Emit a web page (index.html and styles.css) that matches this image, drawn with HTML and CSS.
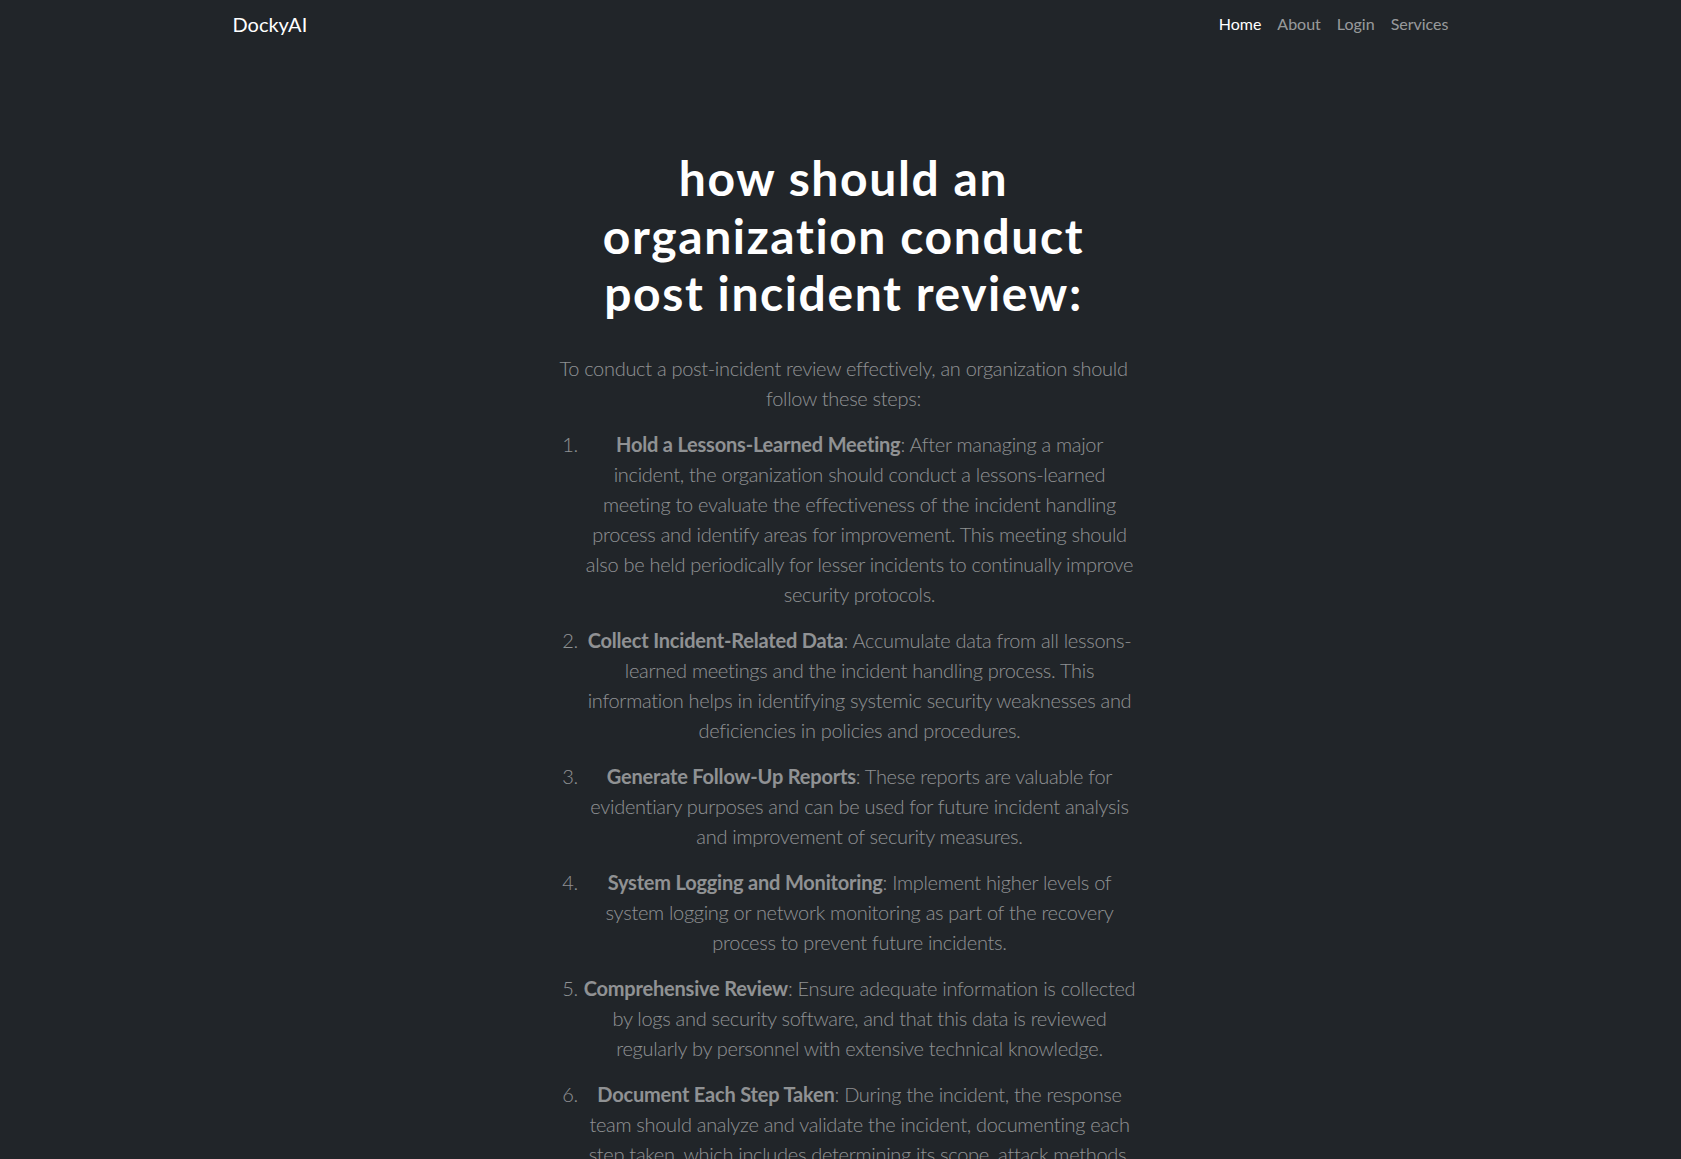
FILE: index.html
```html
<!DOCTYPE html>
<html lang="en">
<head>
<meta charset="utf-8">
<title>DockyAI</title>
<link rel="stylesheet" href="styles.css">
</head>
<body>
<header class="navbar">
  <div class="container nav-inner">
    <a class="brand" href="#">DockyAI</a>
    <nav class="nav-links">
      <a class="nav-link active" href="#">Home</a>
      <a class="nav-link" href="#">About</a>
      <a class="nav-link" href="#">Login</a>
      <a class="nav-link" href="#">Services</a>
    </nav>
  </div>
</header>
<main class="content">
  <h1 class="title">how should an organization conduct post incident review:</h1>
  <div class="answer">
    <p>To conduct a post-incident review effectively, an organization should follow these steps:</p>
    <ol>
      <li><p><strong>Hold a Lessons-Learned Meeting</strong>: After managing a major incident, the organization should conduct a lessons-learned meeting to evaluate the effectiveness of the incident handling process and identify areas for improvement. This meeting should also be held periodically for lesser incidents to continually improve security protocols.</p></li>
      <li><p><strong>Collect Incident-Related Data</strong>: Accumulate data from all lessons-learned meetings and the incident handling process. This information helps in identifying systemic security weaknesses and deficiencies in policies and procedures.</p></li>
      <li><p><strong>Generate Follow-Up Reports</strong>: These reports are valuable for evidentiary purposes and can be used for future incident analysis and improvement of security measures.</p></li>
      <li><p><strong>System Logging and Monitoring</strong>: Implement higher levels of system logging or network monitoring as part of the recovery process to prevent future incidents.</p></li>
      <li><p><strong>Comprehensive Review</strong>: Ensure adequate information is collected by logs and security software, and that this data is reviewed regularly by personnel with extensive technical knowledge.</p></li>
      <li><p><strong>Document Each Step Taken</strong>: During the incident, the response team should analyze and validate the incident, documenting each step taken, which includes determining its scope, attack methods, and exploited vulnerabilities.</p></li>
    </ol>
  </div>
</main>
</body>
</html>
```

FILE: styles.css
```css
html, body {
  margin: 0;
  padding: 0;
}
body {
  background: #212529;
  color: rgba(255, 255, 255, 0.5);
  font-family: Lato, "Open Sans", "Liberation Sans", sans-serif;
}
a {
  text-decoration: none;
}
.container {
  width: 1216px;
  margin: 0 auto;
}
.navbar {
  padding: 8px 0 7px;
}
.nav-inner {
  display: flex;
  align-items: flex-start;
  justify-content: space-between;
}
.brand {
  color: #fff;
  font-size: 20px;
  line-height: 30px;
  padding: 1px 0 1px;
}
.nav-links {
  display: flex;
}
.nav-link {
  color: rgba(255, 255, 255, 0.55);
  font-size: 16px;
  line-height: 24px;
  padding: 4px 8px 5px;
}
.nav-link:last-child {
  padding-right: 0;
}
.nav-link.active {
  color: #fff;
}
.content {
  width: 591px;
  box-sizing: border-box;
  padding-left: 6px;
  margin: 0 auto;
  padding-top: 101px;
  text-align: center;
}
.title {
  color: #fff;
  font-size: 48px;
  line-height: 57.6px;
  font-weight: 700;
  letter-spacing: 1.6px;
  margin: 0 0 31px;
  padding: 0 20px;
}
.answer {
  font-size: 20px;
  line-height: 30px;
  font-weight: 300;
  letter-spacing: -0.3px;
}
.answer p {
  margin: 0 0 16px;
}
.answer ol {
  margin: 0;
  padding-left: 32px;
}
.answer strong {
  font-weight: 700;
  letter-spacing: -0.2px;
}
```
